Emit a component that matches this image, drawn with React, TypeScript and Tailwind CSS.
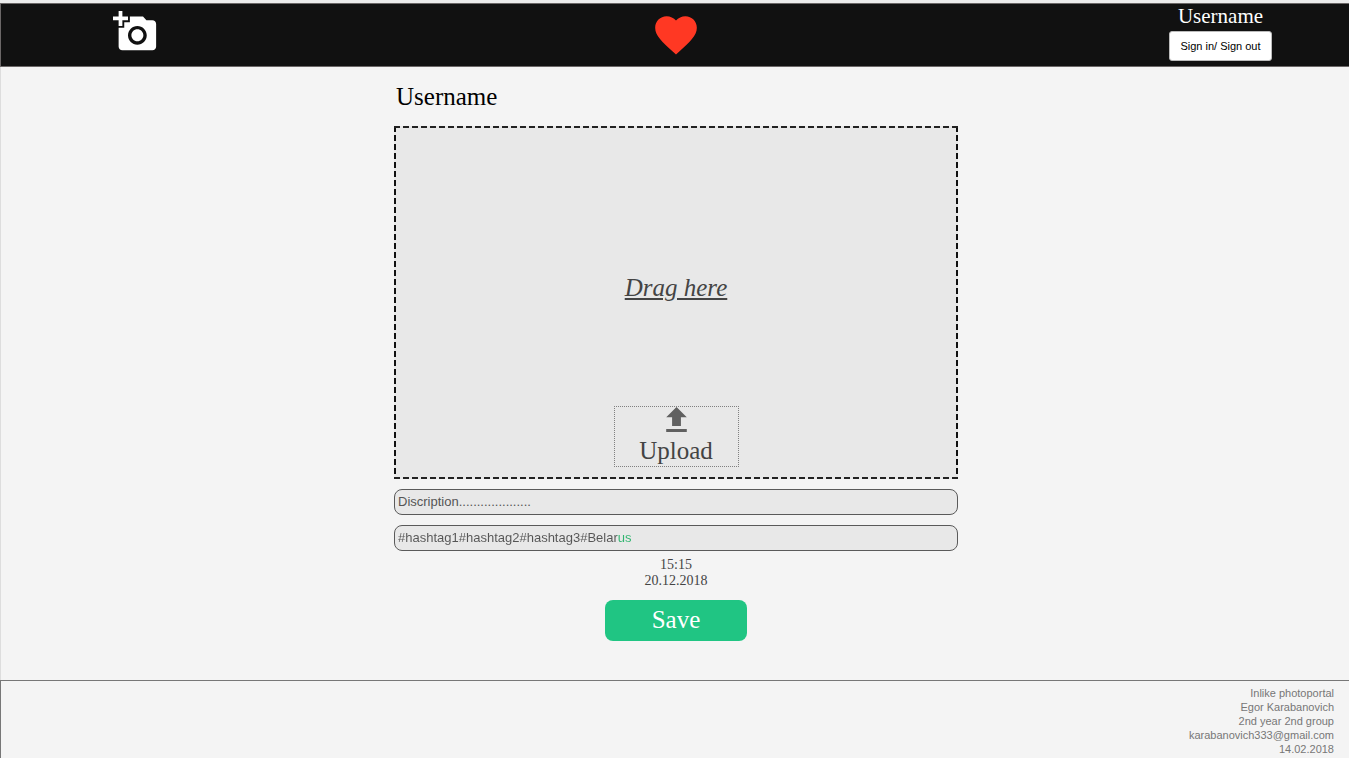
import React from "react";

function CameraIcon() {
  return (
    <svg viewBox="0 0 24 24" className="size-[45px] fill-white" aria-hidden="true">
      <path d="M3 4V1h2v3h3v2H5v3H3V6H0V4h3zm3 6V7h3V4h7l1.83 2H21c1.1 0 2 .9 2 2v12c0 1.1-.9 2-2 2H5c-1.1 0-2-.9-2-2V10h3zm7 9c2.76 0 5-2.24 5-5s-2.24-5-5-5-5 2.24-5 5 2.24 5 5 5zm-3.2-5c0 1.77 1.43 3.2 3.2 3.2s3.2-1.43 3.2-3.2-1.43-3.2-3.2-3.2-3.2 1.43-3.2 3.2z" />
    </svg>
  );
}

function HeartIcon() {
  return (
    <svg viewBox="0 0 24 24" className="size-[50px] fill-[#ff3823]" aria-hidden="true">
      <path d="M12 21.35l-1.45-1.32C5.4 15.36 2 12.28 2 8.5 2 5.42 4.42 3 7.5 3c1.74 0 3.41.81 4.5 2.09C13.09 3.81 14.76 3 16.5 3 19.58 3 22 5.42 22 8.5c0 3.78-3.4 6.86-8.55 11.54L12 21.35z" />
    </svg>
  );
}

function UploadIcon() {
  return (
    <svg viewBox="5 3 14 17" className="h-[25px] w-[21px] fill-[#606060]" aria-hidden="true">
      <path d="M9 16h6v-6h4l-7-7-7 7h4zm-4 2h14v2H5z" />
    </svg>
  );
}

function Header() {
  return (
    <header className="grid grid-cols-3 items-start border border-r-0 border-[#6b6767] bg-[#111] pl-[1px]">
      <a href="#add" aria-label="Add a photo" className="justify-self-start pt-[5px] pl-[111px]">
        <CameraIcon />
      </a>
      <a href="#likes" aria-label="Likes" className="justify-self-center pt-[6px]">
        <HeartIcon />
      </a>
      <div className="flex flex-col items-center gap-[3px] justify-self-end pr-[77px] pb-[5px]">
        <span className="text-[21px] leading-[24px] text-white">Username</span>
        <button
          type="button"
          className="h-[30px] w-[103px] rounded-[3px] border border-[#bbb] bg-white font-['Liberation_Sans',Arial,sans-serif] text-[11px] text-black"
        >
          Sign in/ Sign out
        </button>
      </div>
    </header>
  );
}

const field =
  "block h-[26px] w-full rounded-[8px] border border-[#5a5a5a] bg-[#e8e8e8] px-[3px] pb-[2px] font-['Liberation_Sans',Arial,sans-serif] text-[13px] outline-none";

function DropZone() {
  return (
    <section
      aria-label="Photo upload"
      className="flex h-[353px] flex-col items-center bg-[#e8e8e8] bg-[image:repeating-linear-gradient(90deg,#222_0_6px,transparent_6px_9px),repeating-linear-gradient(90deg,#222_0_6px,transparent_6px_9px),repeating-linear-gradient(180deg,#111_0_6px,transparent_6px_9px),repeating-linear-gradient(180deg,#111_0_6px,transparent_6px_9px)] bg-[size:100%_2px,100%_2px,2px_100%,2px_100%] bg-[position:left_top,left_bottom,left_top,right_top] bg-no-repeat pt-[146px] pb-[12px]"
    >
      <p className="text-[25px] leading-[32px] text-[#444] italic underline">Drag here</p>
      <button
        type="button"
        className="mt-auto flex w-[125px] flex-col items-center gap-[5px] border border-dotted border-[#808080] pb-[1px] text-[25px] leading-[28px] text-[#444]"
      >
        <UploadIcon />
        Upload
      </button>
    </section>
  );
}

export default function App() {
  return (
    <div className="flex min-h-screen flex-col border-t-[3px] border-[#ececec] bg-[#f4f4f4] font-['Liberation_Serif','Times_New_Roman',serif]">
      <Header />
      <main className="flex flex-1 flex-col items-center border-l border-[#ddd] pt-[14px] pb-6 pl-[2px]">
        <form className="flex w-full max-w-[564px] flex-col" onSubmit={(e) => e.preventDefault()}>
          <h1 className="mb-[13px] pl-[2px] text-[25px] leading-[32px] text-black">Username</h1>
          <DropZone />
          <div className="mt-[10px] flex flex-col gap-[10px]">
            <input
              type="text"
              aria-label="Description"
              defaultValue="Discription...................."
              className={`${field} text-[#555]`}
            />
            <div className={field}>
              <input
                type="text"
                aria-label="Hashtags"
                defaultValue="#hashtag1#hashtag2#hashtag3#Belarus"
                className="block h-full w-full bg-linear-to-r from-[#555] from-[219px] to-[#2fb56f] to-[219px] bg-clip-text text-transparent caret-[#555] outline-none"
              />
            </div>
          </div>
          <div className="mt-[6px] text-center text-[14px] leading-[16px] text-[#444]">
            <p>15:15</p>
            <p>20.12.2018</p>
          </div>
          <button
            type="submit"
            className="mt-[11px] h-[41px] w-[142px] self-center rounded-[8px] bg-[#20c583] pb-[2px] text-[25px] leading-[32px] text-white"
          >
            Save
          </button>
        </form>
      </main>
      <footer className="border-t border-l border-[#777] pt-[5px] pr-[15px] pb-[2px] text-right font-['Liberation_Sans',Arial,sans-serif] text-[11px] leading-[14px] text-[#777]">
        <p>Inlike photoportal</p>
        <p>Egor Karabanovich</p>
        <p>2nd year 2nd group</p>
        <p>
          <a href="mailto:karabanovich333@gmail.com">karabanovich333@gmail.com</a>
        </p>
        <p>14.02.2018</p>
      </footer>
    </div>
  );
}
